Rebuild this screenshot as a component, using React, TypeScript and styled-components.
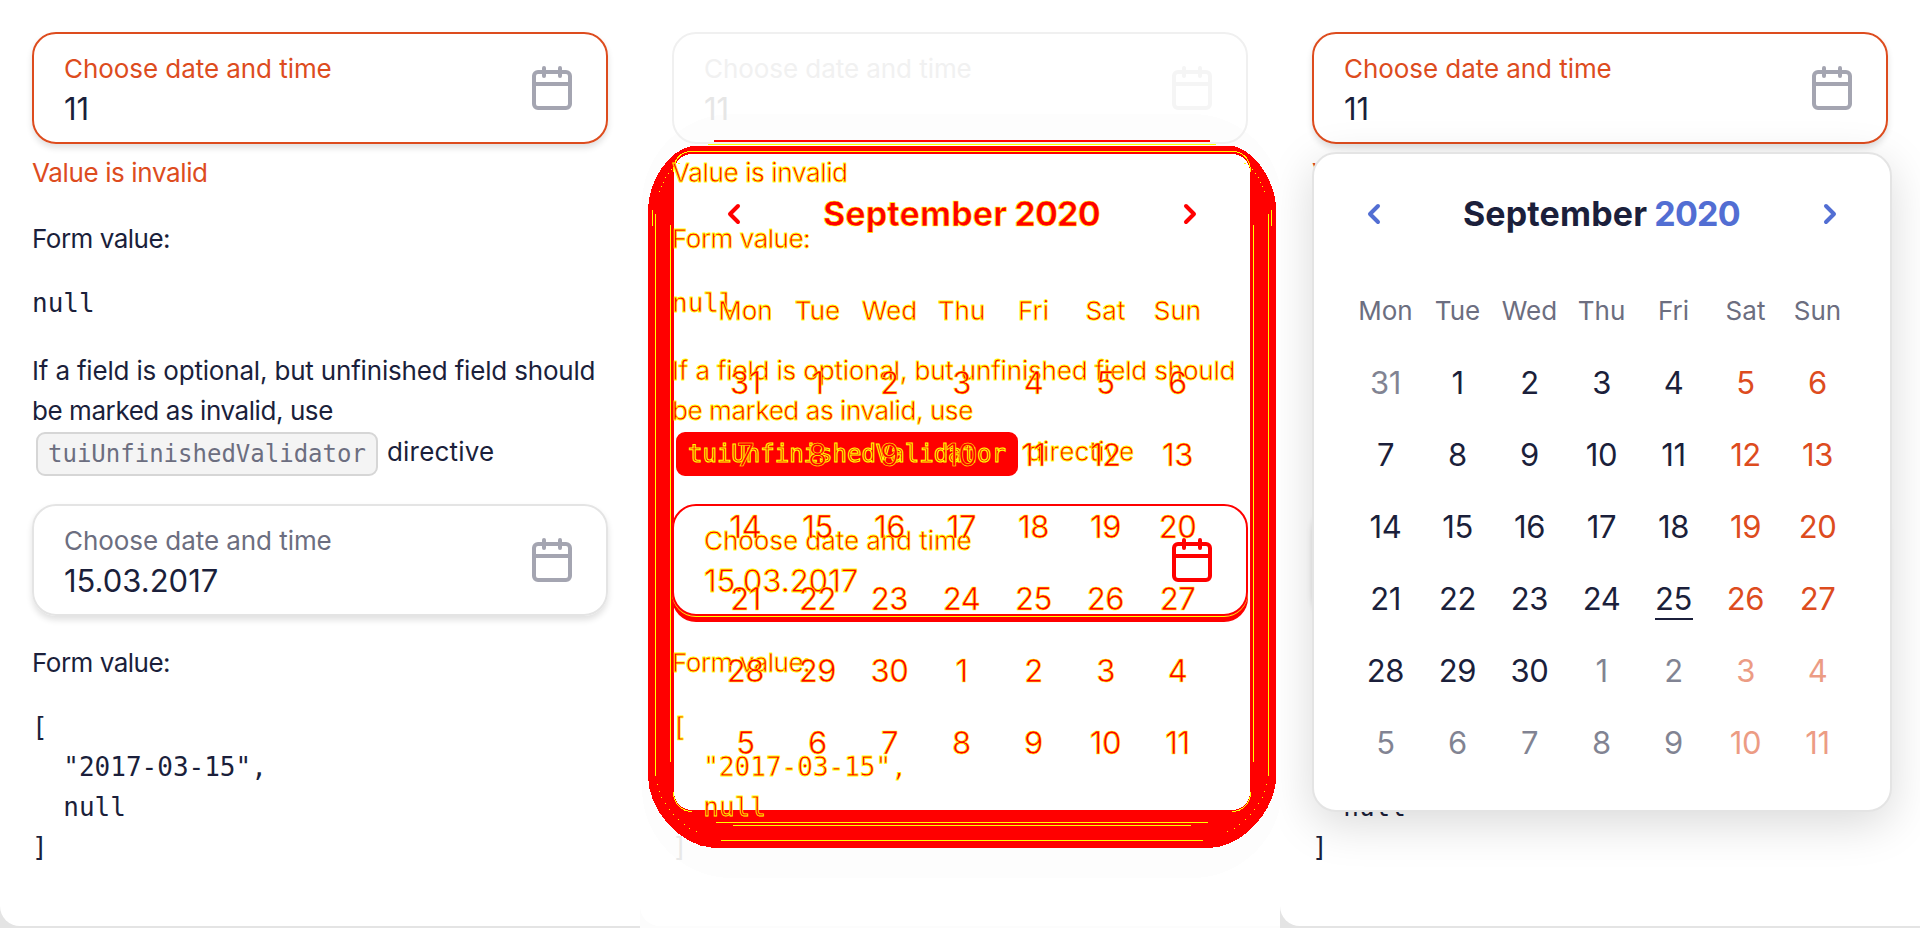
import React from 'react';
import styled, { createGlobalStyle, css } from 'styled-components';

type Mode = 'plain' | 'diff';
type Tone = 'normal' | 'error' | 'ghost' | 'diff';

const GlobalStyle = createGlobalStyle`
  * { box-sizing: border-box; }
  body {
    margin: 0;
    background: #fff;
    color: #1b1f3b;
    font-family: Inter, sans-serif;
    font-size: 26px;
    overflow: hidden;
  }
`;

const diffInk = css`
  color: #f00;
  -webkit-text-stroke: 0.8px #ff0;
`;

const diffInkBold = css`
  color: #f00;
  -webkit-text-stroke: 0.6px #ff0;
`;

const Board = styled.main`
  display: grid;
  grid-template-columns: repeat(3, 640px);
  height: 928px;
`;

const Panel = styled.section<{ $mode: Mode }>`
  position: relative;
  overflow: hidden;
  height: 928px;
  padding-bottom: 2px;
  background: ${(p) => (p.$mode === 'diff' ? '#fcfcfc' : '#e4e4e4')};
`;

const Sheet = styled.div`
  height: 926px;
  padding: 32px 32px 0;
  border-bottom-left-radius: 20px;
  background: #fff;
`;

const Form = styled.div`
  position: relative;
  display: flex;
  flex-direction: column;
`;

const fieldTones = {
  normal: css`
    border-color: #e4e4e4;
    box-shadow: 0 4px 6px rgba(0, 0, 0, 0.12);
  `,
  error: css`
    border-color: #dd4c1e;
    box-shadow: 0 4px 6px rgba(0, 0, 0, 0.12);
  `,
  ghost: css`
    border-color: #f0f0f0;
  `,
  diff: css`
    border-color: #f00;
    box-shadow: 0 1px 0 #ff0, 0 6px 0 #f00;
  `,
};

const FieldBox = styled.div<{ $tone: Tone }>`
  display: flex;
  align-items: center;
  justify-content: space-between;
  width: 576px;
  height: 112px;
  padding: 0 30px;
  border: 2px solid;
  border-radius: 24px;
  ${(p) => fieldTones[p.$tone]}
`;

const FieldText = styled.div`
  display: flex;
  flex-direction: column;
  padding-top: 1px;
  line-height: 40px;
`;

const labelColors = { normal: '#6c6e80', error: '#dd4c1e', ghost: '#f1f1f1', diff: '#f00' };
const valueColors = { normal: '#1b1f3b', error: '#1b1f3b', ghost: '#e6e6e6', diff: '#f00' };
const iconColors = { normal: '#a4a5b1', error: '#a4a5b1', ghost: '#f5f5f5', diff: '#f00' };

const Label = styled.span<{ $tone: Tone }>`
  color: ${(p) => labelColors[p.$tone]};
  letter-spacing: -0.06px;
  ${(p) => p.$tone === 'diff' && diffInk}
`;

const Value = styled.span<{ $tone: Tone }>`
  color: ${(p) => valueColors[p.$tone]};
  font-size: 31px;
  line-height: 39px;
  ${(p) => p.$tone === 'diff' && diffInk}
`;

const Line = styled.div<{ $mode: Mode; $gap?: number; $track?: number; $error?: boolean }>`
  margin-top: ${(p) => p.$gap ?? 0}px;
  height: 40px;
  line-height: 40px;
  white-space: nowrap;
  letter-spacing: ${(p) => p.$track ?? 0}px;
  color: ${(p) => (p.$error ? '#dd4c1e' : 'inherit')};
  ${(p) => p.$mode === 'diff' && diffInk}
`;

const Code = styled.pre<{ $mode: Mode; $gap: number }>`
  margin: ${(p) => p.$gap}px 0 0;
  font: 26px/40px 'DejaVu Sans Mono', monospace;
  ${(p) => p.$mode === 'diff' && diffInk}
`;

const Faded = styled.span<{ $on: boolean }>`
  ${(p) =>
    p.$on &&
    css`
      color: #e8e8e8;
      -webkit-text-stroke: 0;
    `}
`;

const ChipLine = styled.div`
  display: flex;
  align-items: flex-start;
  gap: 9px;
  height: 44px;
  margin: 1px 0 28px 4px;
`;

const Chip = styled.code<{ $mode: Mode }>`
  width: 342px;
  height: 44px;
  padding: 0 10px;
  border: 2px solid #d6d6d6;
  border-radius: 9px;
  background: #f4f4f4;
  color: #6c6e80;
  font: 24px/41px 'DejaVu Sans Mono', monospace;
  ${(p) =>
    p.$mode === 'diff' &&
    css`
      ${diffInk}
      -webkit-text-stroke-width: 1.1px;
      border-color: #f00;
      background: #f00;
    `}
`;

const Popup = styled.div<{ $mode: Mode }>`
  position: absolute;
  left: 32px;
  top: 152px;
  width: 580px;
  height: 660px;
  padding: 24px 36px 0;
  border: 2px solid transparent;
  border-radius: 24px;
  ${(p) =>
    p.$mode === 'plain' &&
    css`
      border-color: #e4e4e4;
      background: #fff;
      box-shadow: 0 12px 46px rgba(0, 0, 0, 0.15);
    `}
`;

const MonthBar = styled.div<{ $mode: Mode }>`
  display: flex;
  align-items: center;
  justify-content: space-between;
  height: 72px;
  padding: 0 17px;
  color: ${(p) => (p.$mode === 'diff' ? '#f00' : '#526ed3')};
`;

const Title = styled.div<{ $mode: Mode }>`
  display: flex;
  gap: 7px;
  padding-right: 1px;
  font-size: 34px;
  font-weight: 700;
  line-height: 72px;
  ${(p) => p.$mode === 'diff' && diffInkBold}
`;

const Month = styled.span<{ $mode: Mode }>`
  color: ${(p) => (p.$mode === 'diff' ? '#f00' : '#1b1f3b')};
  letter-spacing: 0.15px;
`;

const Year = styled.span`
  letter-spacing: -0.7px;
`;

const Days = styled.div`
  display: grid;
  grid-template-columns: repeat(7, 72px);
  grid-auto-rows: 72px;
  margin: 25px 0 0 -0.5px;
`;

const Weekday = styled.span<{ $mode: Mode }>`
  line-height: 71px;
  text-align: center;
  color: #6c6e80;
  ${(p) => p.$mode === 'diff' && diffInk}
`;

const Day = styled.span<{ $mode: Mode; $weekend: boolean; $outside: boolean; $today: boolean }>`
  display: flex;
  align-items: center;
  justify-content: center;
  font-size: 31px;
  letter-spacing: -0.4px;
  color: ${(p) => (p.$weekend ? '#dd4c1e' : '#1b1f3b')};
  opacity: ${(p) => (p.$outside && p.$mode === 'plain' ? 0.55 : 1)};
  ${(p) => p.$mode === 'diff' && diffInkBold}

  & > span {
    min-width: 38px;
    height: 38px;
    line-height: 38px;
    text-align: center;
    box-shadow: ${(p) => (p.$today && p.$mode === 'plain' ? '0 2px 0 #1b1f3b' : 'none')};
  }
`;

const Halo = styled.svg`
  position: absolute;
  left: 0;
  top: 0;
`;

const CalendarIcon = ({ color }: { color: string }) => (
  <svg width="48" height="48" viewBox="0 0 48 48" fill="none" stroke={color} strokeWidth="4" strokeLinecap="round">
    <rect x="6" y="8" width="36" height="36" rx="4" />
    <path d="M6 20H42" />
    <path d="M16 4V12M32 4V12" />
  </svg>
);

const Chevron = ({ back }: { back?: boolean }) => (
  <svg width="14" height="24" viewBox="0 0 14 24" fill="none" stroke="currentColor" strokeWidth="4" strokeLinecap="round" strokeLinejoin="round">
    <path d={back ? 'M11 4L3 12L11 20' : 'M3 4L11 12L3 20'} />
  </svg>
);

const DiffHalo = () => (
  <Halo width="640" height="928" viewBox="0 0 640 928" shapeRendering="crispEdges">
    <rect x="2" y="114" width="640" height="764" rx="90" fill="#fdfdfd" />
    <path d="M74 140H570V142H74Z" fill="#f00" />
    <path d="M68 144H576V145H68Z" fill="#ff0" />
    <path
      d="M51 146H593C614 150 636 180 636 210V777C636 808 606 846 570 848H74C38 846 8 808 8 777V210C8 180 30 150 51 146Z"
      fill="#f00"
    />
    <rect x="34" y="154" width="576" height="656" rx="18" fill="#fff" />
    <g fill="none" stroke="#ff0" strokeWidth="1">
      <path d="M33.5 172C33.5 160 40 151.5 52 151.5H592C604 151.5 610.5 160 610.5 172" />
      <path d="M33.5 792C33.5 804 42 811.5 52 811.5M592 811.5C602 811.5 610.5 804 610.5 792" />
      <path d="M12.5 210V226M15.5 214V776M30.5 225V762M613.5 225V762M628.5 214V776M631.5 210V226" />
      <path d="M76 822.5H568M93 825.5H551M81 840.5H563" />
      <path d="M19 192C26 174 32 167 40 163M625 192C618 174 612 167 604 163" strokeDasharray="1 4" />
      <path d="M17 784C22 806 40 826 62 834M627 784C622 806 604 826 582 834" strokeDasharray="1 6" />
    </g>
  </Halo>
);

const Field = ({ tone, value }: { tone: Tone; value: string }) => (
  <FieldBox $tone={tone}>
    <FieldText>
      <Label $tone={tone}>Choose date and time</Label>
      <Value $tone={tone}>{value}</Value>
    </FieldText>
    <CalendarIcon color={iconColors[tone]} />
  </FieldBox>
);

const DateForm = ({ mode }: { mode: Mode }) => {
  const diff = mode === 'diff';
  return (
    <Form>
      <Field tone={diff ? 'ghost' : 'error'} value="11" />
      <Line $mode={mode} $gap={9} $track={-0.37} $error>Value is invalid</Line>
      <Line $mode={mode} $gap={26} $track={-0.5}>Form value:</Line>
      <Code $mode={mode} $gap={24}>null</Code>
      <Line $mode={mode} $gap={28} $track={-0.18}>If a field is optional, but unfinished field should</Line>
      <Line $mode={mode} $track={-0.43}>be marked as invalid, use</Line>
      <ChipLine>
        <Chip $mode={mode}>tuiUnfinishedValidator</Chip>
        <Line $mode={mode} $track={0.2}>directive</Line>
      </ChipLine>
      <Field tone={diff ? 'diff' : 'normal'} value="15.03.2017" />
      <Line $mode={mode} $gap={27} $track={-0.5}>Form value:</Line>
      <Code $mode={mode} $gap={24}>
        {'[\n  "2017-03-15",\n  null\n'}
        <Faded $on={diff}>]</Faded>
      </Code>
    </Form>
  );
};

const weekdays = ['Mon', 'Tue', 'Wed', 'Thu', 'Fri', 'Sat', 'Sun'];
const days = [31, ...Array.from({ length: 30 }, (_, i) => i + 1), ...Array.from({ length: 11 }, (_, i) => i + 1)];

const Calendar = ({ mode }: { mode: Mode }) => (
  <Popup $mode={mode}>
    <MonthBar $mode={mode}>
      <Chevron back />
      <Title $mode={mode}>
        <Month $mode={mode}>September</Month>
        <Year>2020</Year>
      </Title>
      <Chevron />
    </MonthBar>
    <Days>
      {weekdays.map((name) => (
        <Weekday key={name} $mode={mode}>{name}</Weekday>
      ))}
      {days.map((day, i) => (
        <Day key={i} $mode={mode} $weekend={i % 7 > 4} $outside={i === 0 || i > 30} $today={i === 25}>
          <span>{day}</span>
        </Day>
      ))}
    </Days>
  </Popup>
);

export default function App() {
  return (
    <Board>
      <GlobalStyle />
      <Panel $mode="plain">
        <Sheet>
          <DateForm mode="plain" />
        </Sheet>
      </Panel>
      <Panel $mode="diff">
        <Sheet>
          <DiffHalo />
          <DateForm mode="diff" />
          <Calendar mode="diff" />
        </Sheet>
      </Panel>
      <Panel $mode="plain">
        <Sheet>
          <DateForm mode="plain" />
          <Calendar mode="plain" />
        </Sheet>
      </Panel>
    </Board>
  );
}
